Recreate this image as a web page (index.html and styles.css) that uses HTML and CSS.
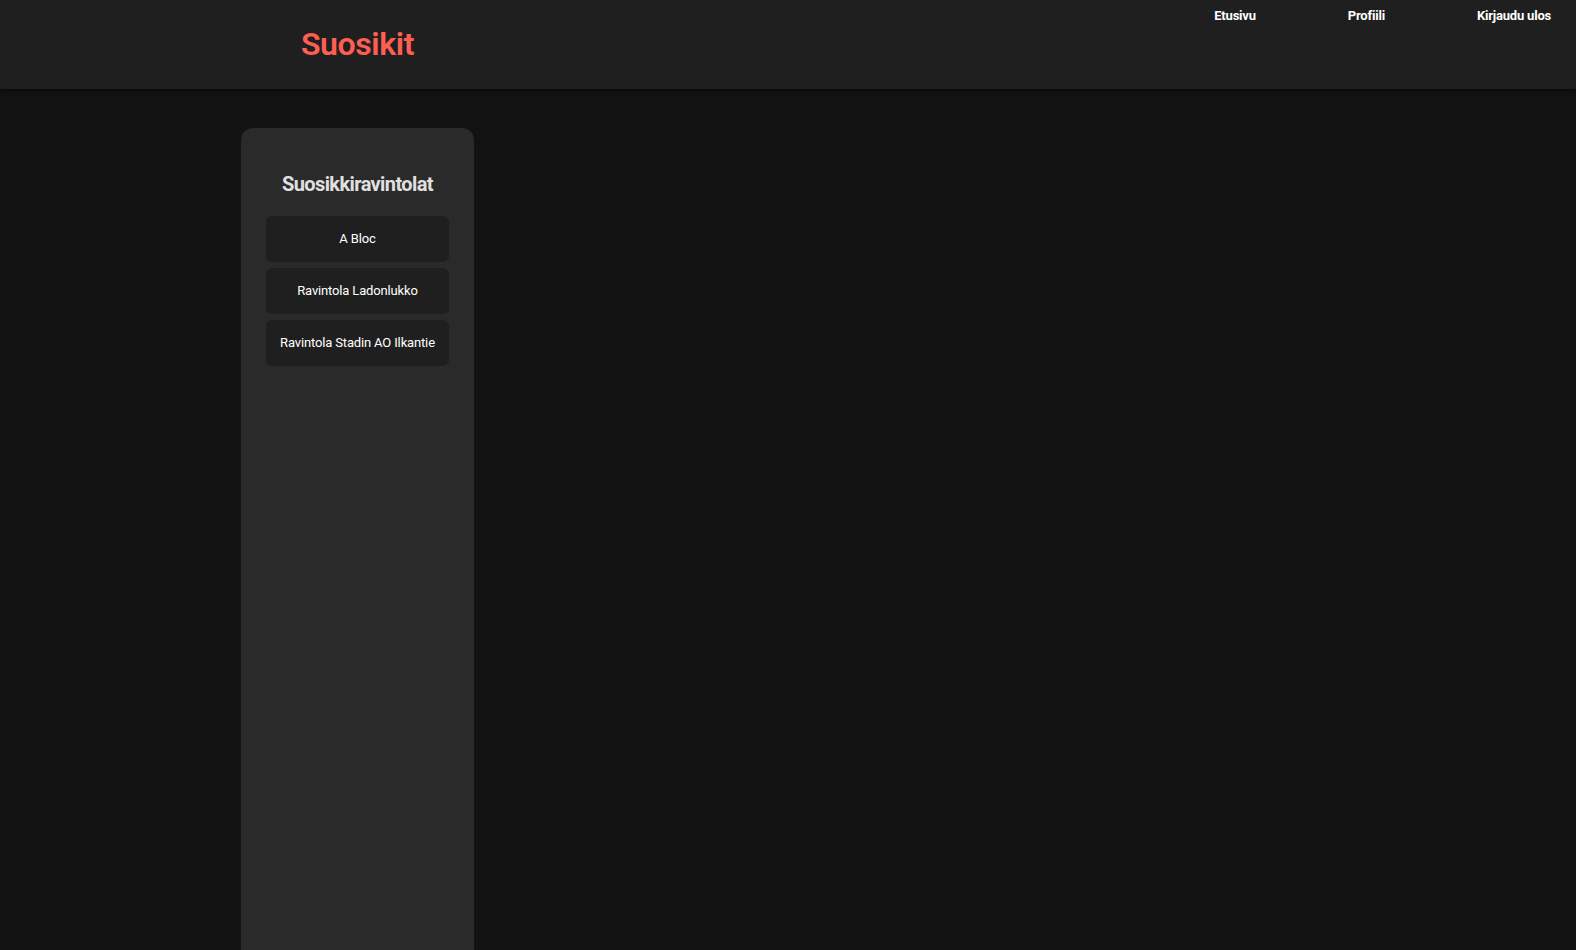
FILE: index.html
```html
<!DOCTYPE html>
<html lang="fi">
<head>
<meta charset="utf-8">
<title>Suosikit</title>
<link rel="stylesheet" href="styles.css">
</head>
<body>
<header class="topbar">
  <div class="brand-col">
    <h1 class="brand">Suosikit</h1>
  </div>
  <nav class="nav">
    <a class="nav-link" href="#">Etusivu</a>
    <a class="nav-link" href="#">Profiili</a>
    <a class="nav-link" href="#">Kirjaudu ulos</a>
  </nav>
</header>
<main class="main">
  <aside class="sidebar">
    <h2 class="sidebar-title">Suosikkiravintolat</h2>
    <ul class="fav-list">
      <li class="fav-item">A Bloc</li>
      <li class="fav-item">Ravintola Ladonlukko</li>
      <li class="fav-item">Ravintola Stadin AO Ilkantie</li>
    </ul>
  </aside>
</main>
</body>
</html>
```
FILE: styles.css
```css
* { box-sizing: border-box; }
html, body { margin: 0; padding: 0; }
body {
  background: #121212;
  color: #fff;
  font-family: Roboto, "Liberation Sans", Arial, sans-serif;
  height: 950px;
  overflow: hidden;
}
.topbar {
  height: 89px;
  background: #1f1f1f;
  display: flex;
  justify-content: space-between;
  align-items: flex-start;
  padding-left: 241px;
  padding-right: 25px;
  box-shadow: 0 2px 4px rgba(0,0,0,0.45);
  position: relative;
  z-index: 1;
}
.brand-col {
  width: 233px;
  display: flex;
  justify-content: center;
}
.brand {
  margin: 0;
  padding-top: 25px;
  font-size: 32px;
  line-height: 38px;
  font-weight: 600;
  color: #ff5f52;
  letter-spacing: -0.4px;
}
.nav {
  display: flex;
  gap: 92px;
  padding-top: 8px;
}
.nav-link {
  color: #fff;
  text-decoration: none;
  font-size: 13px;
  line-height: 16px;
  font-weight: 700;
  letter-spacing: -0.2px;
}
.main {
  padding-left: 241px;
  padding-top: 39px;
}
.sidebar {
  width: 233px;
  height: 900px;
  background: #2a2a2a;
  border-radius: 12px;
  padding: 44px 25px 0;
}
.sidebar-title {
  margin: 0 0 20px;
  text-align: center;
  font-size: 20px;
  line-height: 24px;
  font-weight: 700;
  color: #e0e0e0;
  letter-spacing: -0.6px;
}
.fav-list {
  list-style: none;
  margin: 0;
  padding: 0;
  display: flex;
  flex-direction: column;
  gap: 6px;
}
.fav-item {
  height: 46px;
  background: #1f1f1f;
  border-radius: 6px;
  display: flex;
  align-items: center;
  justify-content: center;
  padding-bottom: 2px;
  font-size: 13px;
  font-weight: 400;
  color: #fff;
  letter-spacing: -0.15px;
}
```
